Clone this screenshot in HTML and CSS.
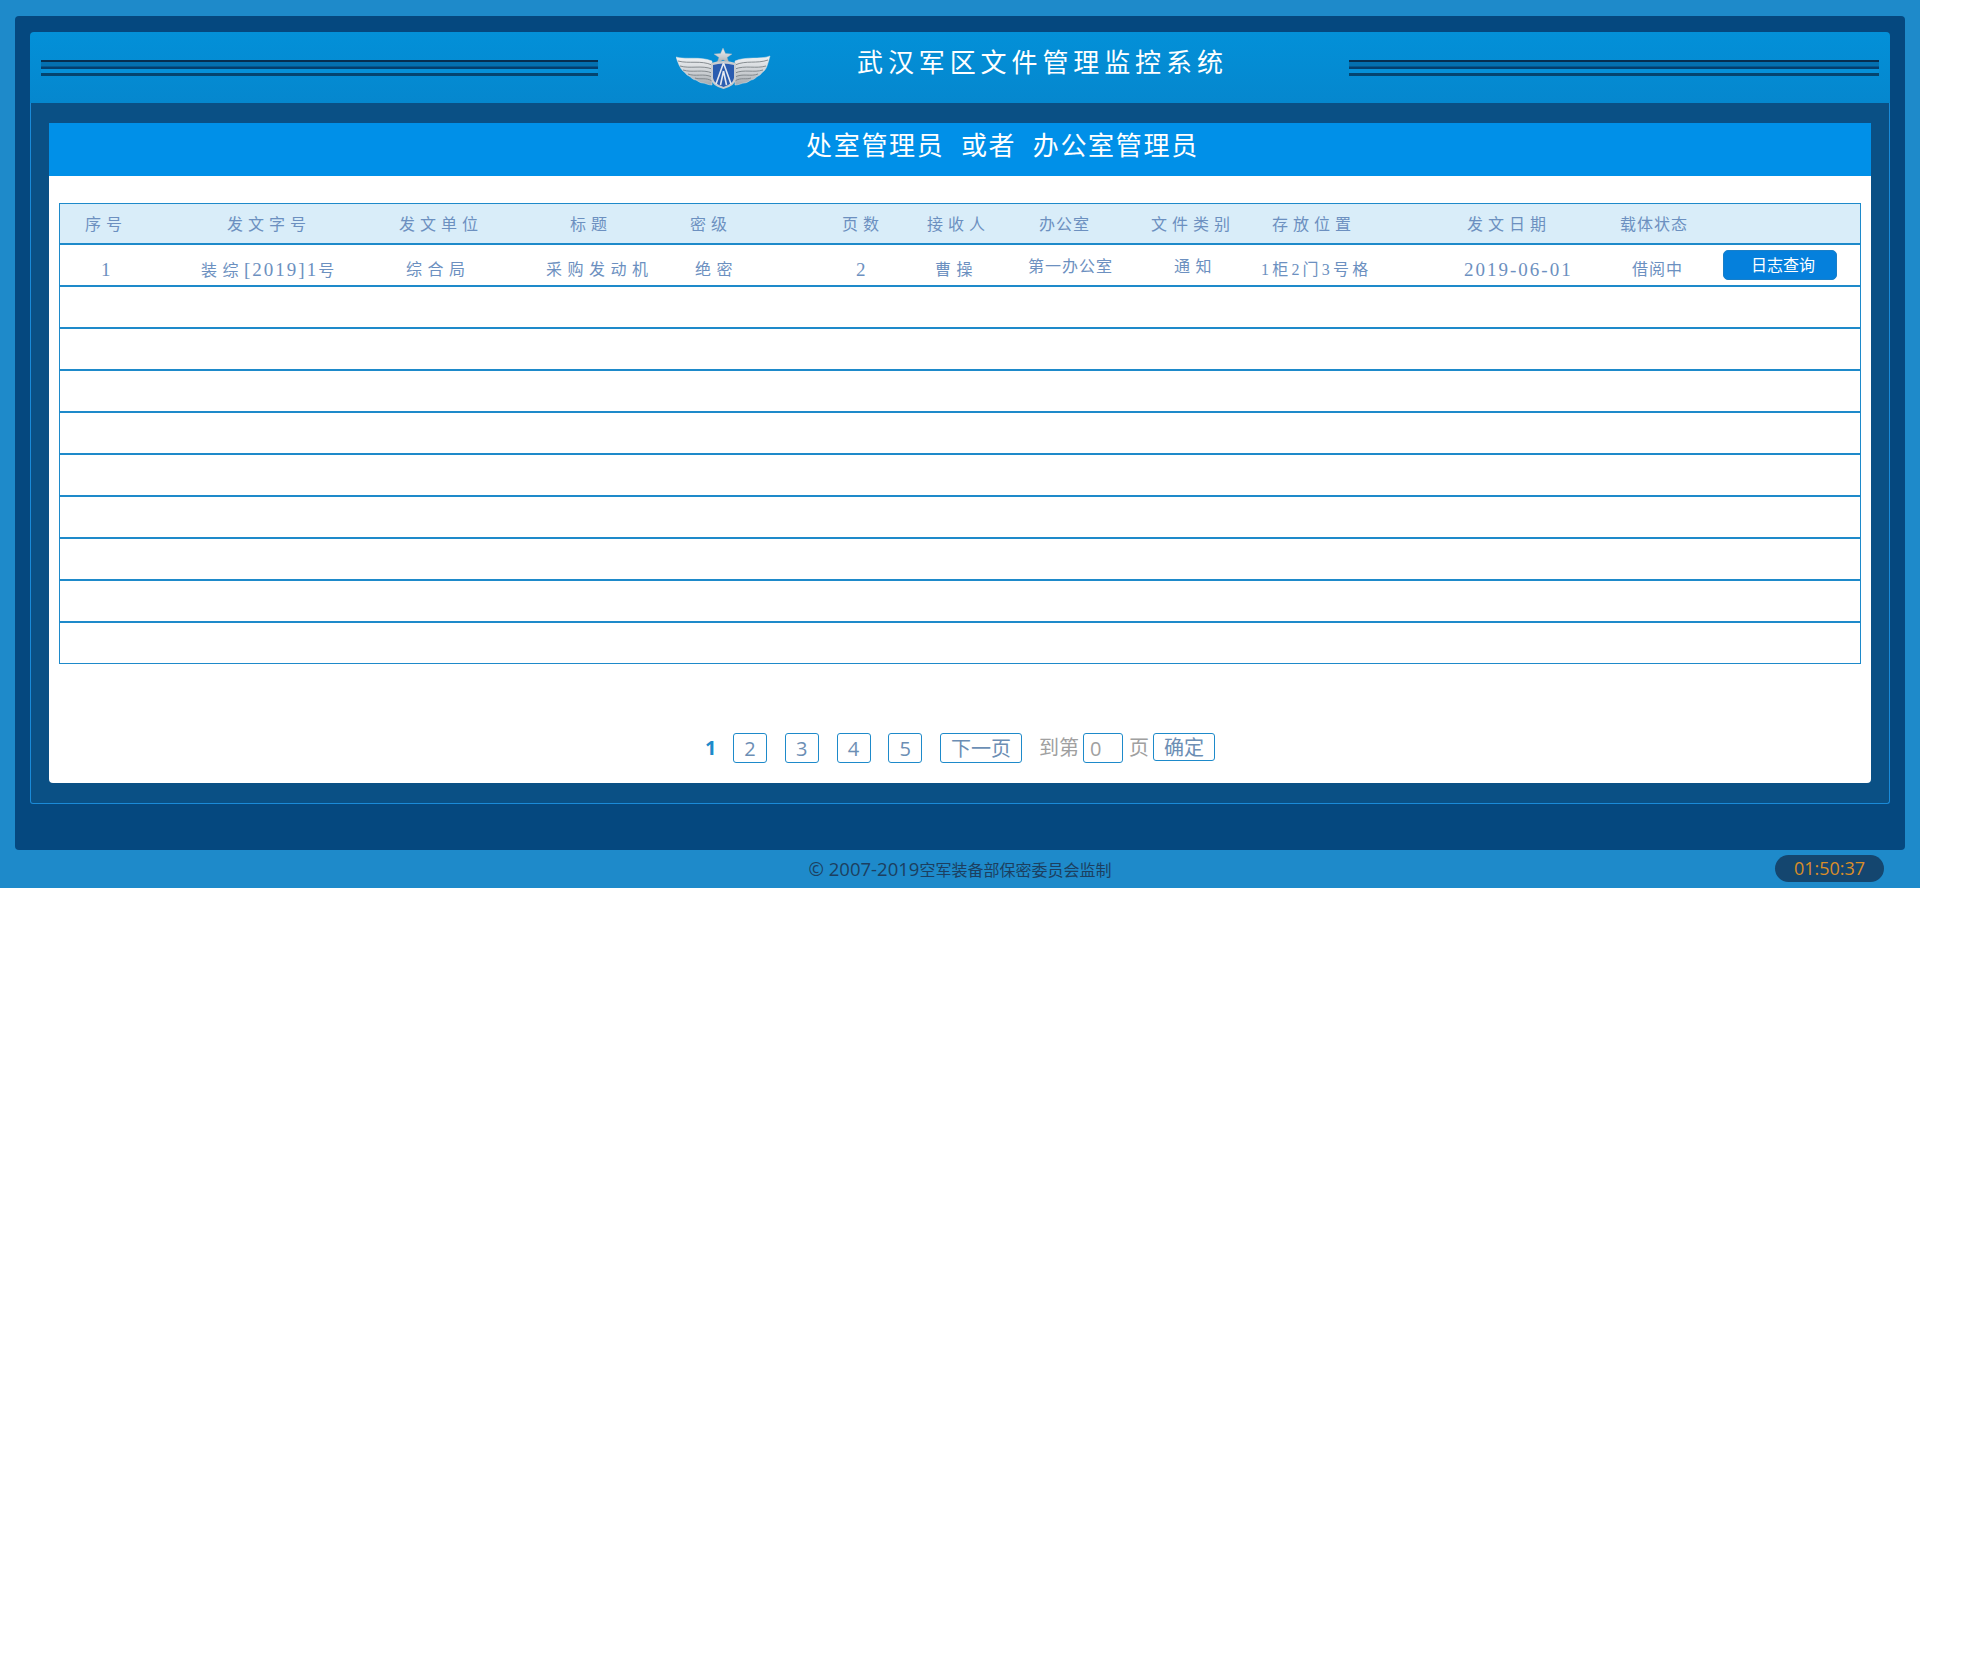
FILE: index.html
```html
<!DOCTYPE html>
<html lang="zh-CN">
<head>
  <meta charset="UTF-8">
  <title>武汉军区文件管理监控系统</title>
  <link rel="stylesheet" href="styles.css">
</head>
<body>
  <div class="page">
    <div class="frame">
      <header class="top">
        <div class="stripes stripes-left"></div>
        <svg class="logo" viewBox="0 0 95 42" width="95" height="42">
          <defs>
            <linearGradient id="silver" x1="0" y1="0" x2="0" y2="1">
              <stop offset="0" stop-color="#f0f2f4"/>
              <stop offset="0.600" stop-color="#c8ccd0"/>
              <stop offset="1" stop-color="#a4a9ae"/>
            </linearGradient>
          </defs>
          <path class="wing" d="M0 9 C10 12 24 8 36 13 L36 37 C32 37 29 35 27 35 C24 35 22 33 20 32 C17 32 15 29 13 28 C10 27 9 24 7 23 C4 20 2 15 0 9Z"/>
          <path class="wing" d="M94 8 C84 12 70 8 59 13 L59 37 C63 37 66 35 68 35 C71 35 73 33 75 32 C78 32 80 29 82 28 C85 27 86 24 88 23 C91 20 92 15 94 8Z"/>
          <path class="wing-line" d="M2 13 C13 16 25 12 36 17 M4 18 C14 21 26 17 36 21 M7 22 C16 25 27 21 36 25 M12 26 C19 29 28 25 36 29 M19 30 C24 32 30 29 36 33"/>
          <path class="wing-line" d="M92 12 C81 16 70 12 59 17 M90 18 C80 21 69 17 59 21 M87 22 C78 25 68 21 59 25 M82 26 C75 29 67 25 59 29 M75 30 C70 32 65 29 59 33"/>
          <polygon class="star" points="47,0 49.500,5.500 56,6 51,9.500 53,15 47,11.800 41,15 43,9.500 38,6 44.500,5.500"/>
          <path class="shield-edge" d="M35 15 Q47 11 60 15 L60 31 Q59 38 47.500 41 Q36 38 35 31Z"/>
          <path class="shield" d="M37 17 Q47 14 58 17 L58 30 Q57 36 47.500 39 Q38 36 37 30Z"/>
          <path class="shield-mark" d="M47.500 15 L40 36 M47.500 15 L55 36 M47.500 23 L44.500 37 M47.500 23 L50.500 37"/>
        </svg>
        <h1 class="sys-title">武汉军区文件管理监控系统</h1>
        <div class="stripes stripes-right"></div>
      </header>

      <main class="panel">
        <div class="card">
          <h2 class="card-title">处室管理员&nbsp; 或者&nbsp; 办公室管理员</h2>

          <div class="table">
            <div class="row row-head">
              <span>序号</span>
              <span>发文字号</span>
              <span>发文单位</span>
              <span>标题</span>
              <span>密级</span>
              <span>页数</span>
              <span>接收人</span>
              <span class="tight">办公室</span>
              <span>文件类别</span>
              <span>存放位置</span>
              <span>发文日期</span>
              <span class="tight">载体状态</span>
            </div>
            <div class="row row-data">
              <span class="num">1</span>
              <span>装综<span class="num">[2019]1</span>号</span>
              <span>综合局</span>
              <span>采购发动机</span>
              <span>绝密</span>
              <span class="num">2</span>
              <span>曹操</span>
              <span class="tight raised">第一办公室</span>
              <span class="raised">通知</span>
              <span class="narrow">1柜2门3号格</span>
              <span class="num">2019-06-01</span>
              <span class="tight">借阅中</span>
              <button class="log-btn" type="button">日志查询</button>
            </div>
            <div class="row"></div>
            <div class="row"></div>
            <div class="row"></div>
            <div class="row"></div>
            <div class="row"></div>
            <div class="row"></div>
            <div class="row"></div>
            <div class="row"></div>
            <div class="row"></div>
          </div>

          <div class="pager">
            <b class="cur">1</b>
            <a class="pg">2</a>
            <a class="pg">3</a>
            <a class="pg">4</a>
            <a class="pg">5</a>
            <a class="pg pg-next">下一页</a>
            <span class="goto">到第</span>
            <input class="pg-input" type="text" value="0">
            <span class="goto">页</span>
            <a class="pg pg-ok">确定</a>
          </div>
        </div>
      </main>
    </div>

    <footer class="foot">
      <span></span>
      <p class="copy">© 2007-2019<span class="copy-cn">空军装备部保密委员会监制</span></p>
      <span class="clock">01:50:37</span>
    </footer>
  </div>
</body>
</html>
```

FILE: styles.css
```css
* { box-sizing: border-box; }
body { margin: 0; background: #fff; font-family: "Liberation Serif", "Noto Sans CJK SC", serif; }
.page { width: 1920px; height: 888px; background: #1e8aca; padding: 16px 15px 0; }

.frame { height: 834px; background: #05487f; border-radius: 4px; padding: 16px 15px 0; }

.top { height: 71px; display: flex; align-items: flex-start; background: linear-gradient(#0390d8, #0587ce); border-radius: 4px 4px 0 0; padding: 0 11px; }
.stripes { height: 16px; margin-top: 28px; background: linear-gradient(#062e50 0, #062e50 2px, #0470b0 2px, #0470b0 6px, #053f6e 7px, #053f6e 9px, #0590d8 9px, #0590d8 13px, #04446f 13px, #04446f 16px); }
.stripes-left { width: 557px; }
.stripes-right { width: 530px; }
.logo { margin: 16px 0 0 78px; flex: none; }
.sys-title { margin: 16px 0 0 86px; width: 492px; font-size: 26px; font-weight: 400; line-height: 32px; letter-spacing: 4.900px; color: #fff; white-space: nowrap; }

.panel { height: 701px; background: #0a5085; border: 1px solid #1a8ad8; border-top: 0; border-radius: 0 0 3px 3px; padding: 20px 18px 0; }
.card { height: 660px; background: #fff; border-radius: 0 0 4px 4px; }
.card-title { height: 53px; margin: 0; background: #0090e8; padding-left: 757px; font-size: 26px; font-weight: 400; line-height: 48px; letter-spacing: 1.700px; color: #fff; white-space: nowrap; }

.table { width: 1802px; margin: 27px 0 0 10px; border: 1px solid #1e8aca; border-bottom: 0; }
.row { display: grid; height: 42px; border-bottom: 2px solid #1e8aca; font-size: 16px; line-height: 20px; color: #6c90c0; white-space: nowrap; }
.row:last-child { height: 41px; border-bottom-width: 1px; }
.row-head { height: 41px; grid-template-columns: 142px 172px 171px 120px 152px 85px 112px 112px 121px 195px 153px 1fr; padding: 11px 0 0 25px; background: #d9edf9; letter-spacing: 5px; }
.row-data { grid-template-columns: 100px 205px 140px 149px 161px 79px 93px 146px 87px 203px 168px 91px 1fr; padding: 15px 0 0 41px; letter-spacing: 5.500px; }
.row-head .tight, .row-data .tight { letter-spacing: 1px; }
.row-data .narrow { letter-spacing: 3.200px; }
.num { font-size: 19px; letter-spacing: 2px; }
.raised { margin-top: -3px; }
.log-btn { width: 114px; height: 30px; margin-top: -10px; border: 1px solid #1a7fc8; border-radius: 5px; background: #0580dc; color: #fff; font: 16px "Liberation Serif", "Noto Sans CJK SC", serif; letter-spacing: 0; padding: 0 0 3px 6px; }

.pager { display: flex; align-items: flex-start; margin-top: 69px; padding-left: 656px; font-family: "Open Sans", "Noto Sans CJK SC", sans-serif; font-size: 20px; line-height: 29px; }
.cur { width: 28px; color: #1e8aca; }
.pg { height: 30px; min-width: 34px; border: 1px solid #1e8aca; border-radius: 3px; color: #6c8eb4; text-align: center; margin-right: 17.750px; }
.pg-next { width: 82px; margin: 0 17px 0 0; }
.goto { color: #a0a0a0; }
.pg-input { width: 40px; height: 30px; margin: 0 6px 0 4px; border: 1px solid #1e8aca; border-radius: 3px; padding: 0 0 0 6px; font: inherit; color: #a0a0a0; }
.pg-ok { width: 62px; height: 28px; margin: 0 0 0 4px; line-height: 28px; }

.foot { height: 38px; display: grid; grid-template-columns: 1fr auto 1fr; align-items: start; padding-top: 5px; font-family: "Open Sans", "Noto Sans CJK SC", sans-serif; }
.copy { margin: 2px 0 0; font-size: 18.500px; line-height: 24px; color: #1c3f60; }
.copy-cn { font-size: 16px; }
.clock { justify-self: end; width: 109px; height: 27px; margin-right: 21px; border-radius: 14px; background: #14466f; color: #d98d28; font-size: 18px; line-height: 27px; text-align: center; }

.wing { fill: url(#silver); stroke: #dfe2e5; stroke-width: 0.500; }
.wing-line { fill: none; stroke: #7c8287; stroke-width: 0.900; }
.star { fill: url(#silver); stroke: #aeb3b8; stroke-width: 0.400; }
.shield-edge { fill: #c8ccd0; }
.shield { fill: #2a5cb0; }
.shield-mark { fill: none; stroke: #e4e8f0; stroke-width: 1.600; }
```
